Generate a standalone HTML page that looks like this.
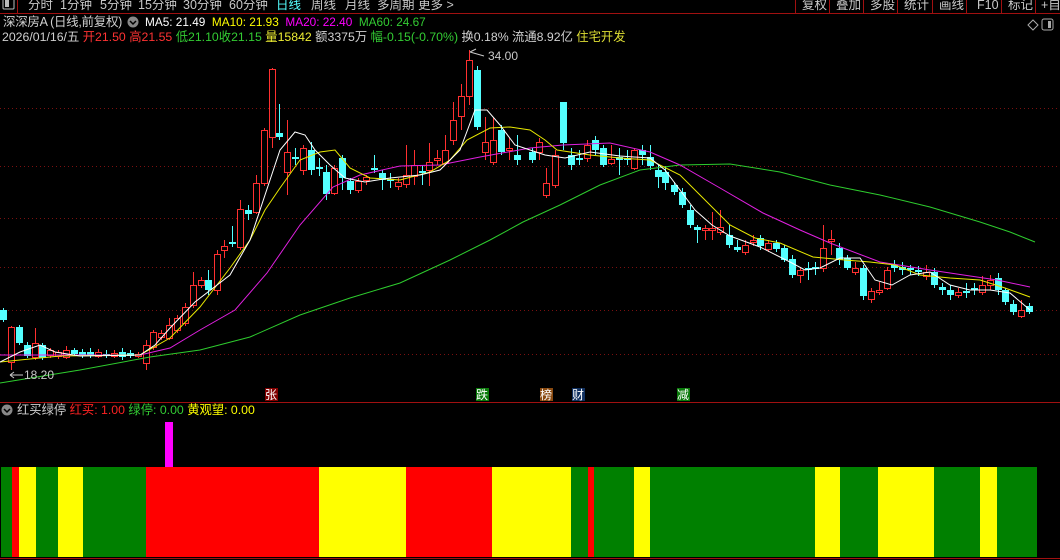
<!DOCTYPE html>
<html><head><meta charset="utf-8"><style>
html,body{margin:0;padding:0;background:#000;width:1060px;height:560px;overflow:hidden}
body{position:relative;font-family:"Liberation Sans","Noto Sans CJK SC",sans-serif;font-size:12px}
.t{position:absolute;white-space:nowrap;line-height:14px}
</style></head><body>
<svg id="s" width="1060" height="560" style="position:absolute;left:0;top:0">
<rect x="0" y="0" width="1060" height="13" fill="#000"/>
<line x1="0" y1="13.5" x2="1060" y2="13.5" stroke="#a01010"/>
<line x1="17.5" y1="0" x2="17.5" y2="13" stroke="#a01010"/>
<rect x="3" y="-3" width="11" height="12" fill="none" stroke="#bbb" rx="1"/>
<rect x="5" y="-1" width="4" height="8" fill="#bbb"/>
<g stroke="#a01010">
<line x1="795.5" y1="0" x2="795.5" y2="13"/><line x1="829.5" y1="0" x2="829.5" y2="13"/><line x1="863.5" y1="0" x2="863.5" y2="13"/><line x1="897.5" y1="0" x2="897.5" y2="13"/><line x1="932.5" y1="0" x2="932.5" y2="13"/><line x1="966.5" y1="0" x2="966.5" y2="13"/><line x1="1001.5" y1="0" x2="1001.5" y2="13"/><line x1="1035.5" y1="0" x2="1035.5" y2="13"/>
</g>
<g font-family="Liberation Sans,Noto Sans CJK SC,sans-serif" font-size="12.5" fill="#c8c8c8">
<text x="28" y="9">分时</text><text x="60" y="9">1分钟</text><text x="100" y="9">5分钟</text><text x="138" y="9">15分钟</text><text x="183" y="9">30分钟</text><text x="229" y="9">60分钟</text>
<text x="276" y="9" fill="#5ff">日线</text><text x="311" y="9">周线</text><text x="345" y="9">月线</text><text x="377" y="9">多周期</text><text x="418" y="9">更多 &gt;</text>
<text x="802" y="9">复权</text><text x="836" y="9">叠加</text><text x="870" y="9">多股</text><text x="904" y="9">统计</text><text x="939" y="9">画线</text><text x="977" y="9">F10</text><text x="1008" y="9">标记</text><text x="1041" y="9">+自</text>
</g>
<g stroke="#7a1010" stroke-dasharray="1,3">
<line x1="0" y1="108.5" x2="1060" y2="108.5"/><line x1="0" y1="166.5" x2="1060" y2="166.5"/><line x1="0" y1="218.5" x2="1060" y2="218.5"/><line x1="0" y1="267.5" x2="1060" y2="267.5"/><line x1="0" y1="310.5" x2="1060" y2="310.5"/><line x1="0" y1="354.5" x2="1060" y2="354.5"/>
</g>
<line x1="0" y1="402.5" x2="1060" y2="402.5" stroke="#a01010"/>
<line x1="0" y1="558.5" x2="1060" y2="558.5" stroke="#a01010"/>
<g id="c"></g>
<polyline fill="none" stroke="#2ecc2e" stroke-width="1" points="0,383 80,370 150,357 200,350 250,337 300,315 350,298 400,283 450,260 490,240 523,222 560,205 600,185 640,170 680,165 730,164 780,172 830,185 880,195 930,207 980,222 1010,232 1035,242"/>
<polyline fill="none" stroke="#e020e0" points="0,355 140,355 170,348 200,330 235,310 267,273 300,225 333,187 360,175 400,166 440,165 480,157 530,148 563,145 610,143 650,152 680,165 720,188 763,213 800,230 830,243 880,262 930,270 997,280 1030,287"/>
<polyline fill="none" stroke="#e8e800" points="0,362 60,356 140,355 170,338 200,307 230,268 250,240 265,210 280,188 300,160 320,152 335,150 350,168 370,178 400,180 430,172 450,160 467,140 490,128 510,127 530,130 545,140 557,150 590,155 620,158 650,160 680,175 700,195 730,225 755,238 780,243 813,257 845,260 870,262 895,265 920,275 950,278 980,280 1005,288 1030,297"/>
<polyline fill="none" stroke="#fff" points="0,362 20,352 40,345 55,352 80,356 140,355 155,345 170,328 195,302 230,275 250,240 265,195 280,150 295,132 305,135 315,150 330,165 345,178 365,182 390,178 420,175 440,170 460,150 475,110 487,110 500,125 515,145 530,150 545,155 565,158 590,152 620,156 650,158 665,170 680,190 695,210 712,225 730,236 760,247 790,262 805,270 820,268 840,258 860,258 875,280 892,285 910,275 930,272 950,285 970,290 990,290 1010,293 1030,310"/>
<g font-family="Liberation Sans,sans-serif" font-size="12" fill="#c8c8c8">
<text x="488" y="60">34.00</text>
<path d="M470 52 L476 49 M470 52 L484 56" stroke="#c8c8c8" fill="none"/>
<text x="24" y="379">18.20</text>
<path d="M10 375 L23 375 M10 375 L14 372 M10 375 L14 378" stroke="#c8c8c8" fill="none"/>
</g>
<g font-family="Noto Sans CJK SC,sans-serif" font-size="12" fill="#fff">
<rect x="265" y="388" width="13" height="13" fill="#800000"/><text x="265" y="399">张</text>
<rect x="476" y="388" width="13" height="13" fill="#0a7a0a"/><text x="476" y="399">跌</text>
<rect x="540" y="388" width="13" height="13" fill="#8a4a10"/><text x="540" y="399">榜</text>
<rect x="572" y="388" width="13" height="13" fill="#103060"/><text x="572" y="399">财</text>
<rect x="677" y="388" width="13" height="13" fill="#0a7a0a"/><text x="677" y="399">减</text>
</g>
<rect x="165" y="422" width="8" height="45" fill="#f0f"/>
<g>
<rect x="1" y="467" width="11" height="90" fill="#008000"/>
<rect x="12" y="467" width="7" height="90" fill="#f00"/>
<rect x="19" y="467" width="17" height="90" fill="#ff0"/>
<rect x="36" y="467" width="22" height="90" fill="#008000"/>
<rect x="58" y="467" width="25" height="90" fill="#ff0"/>
<rect x="83" y="467" width="63" height="90" fill="#008000"/>
<rect x="146" y="467" width="173" height="90" fill="#f00"/>
<rect x="319" y="467" width="87" height="90" fill="#ff0"/>
<rect x="406" y="467" width="86" height="90" fill="#f00"/>
<rect x="492" y="467" width="79" height="90" fill="#ff0"/>
<rect x="571" y="467" width="17" height="90" fill="#008000"/>
<rect x="588" y="467" width="6" height="90" fill="#f00"/>
<rect x="594" y="467" width="40" height="90" fill="#008000"/>
<rect x="634" y="467" width="16" height="90" fill="#ff0"/>
<rect x="650" y="467" width="165" height="90" fill="#008000"/>
<rect x="815" y="467" width="25" height="90" fill="#ff0"/>
<rect x="840" y="467" width="38" height="90" fill="#008000"/>
<rect x="878" y="467" width="56" height="90" fill="#ff0"/>
<rect x="934" y="467" width="46" height="90" fill="#008000"/>
<rect x="980" y="467" width="17" height="90" fill="#ff0"/>
<rect x="997" y="467" width="40" height="90" fill="#008000"/>
</g>
<path d="M1028 25 L1033 20 L1038 25 L1033 30 Z" fill="none" stroke="#aaa"/>
<rect x="1042" y="19" width="11" height="11" rx="2" fill="none" stroke="#aaa"/>
<rect x="1048" y="21" width="3" height="7" fill="#aaa"/>
<circle cx="133" cy="22" r="5.5" fill="#888"/>
<path d="M130 21 L133 24 L136 21" stroke="#000" fill="none" stroke-width="1.5"/>
<circle cx="7" cy="410" r="5.5" fill="#888"/>
<path d="M4 409 L7 412 L10 409" stroke="#000" fill="none" stroke-width="1.5"/>
</svg>
<div class="t" style="left:3px;top:15px;color:#d0d0d0;font-size:12.5px;letter-spacing:-0.3px">深深房A (日线,前复权)</div>
<div class="t" style="left:145px;top:15px;font-size:11.8px"><span style="color:#fff">MA5: 21.49</span>&nbsp; <span style="color:#ff0">MA10: 21.93</span>&nbsp; <span style="color:#f0f">MA20: 22.40</span>&nbsp; <span style="color:#3c3">MA60: 24.67</span></div>
<div class="t" style="left:2px;top:30px;font-size:12.3px;color:#d0d0d0">2026/01/16/五 <span style="color:#f33">开21.50</span> <span style="color:#f33">高21.55</span> <span style="color:#3c3">低21.10</span><span style="color:#3c3">收21.15</span> <span style="color:#ee3">量15842</span> 额3375万 <span style="color:#3c3">幅-0.15(-0.70%)</span> 换0.18% 流通8.92亿 <span style="color:#dd3">住宅开发</span></div>
<div class="t" style="left:17px;top:403px;font-size:12.3px;color:#d0d0d0">红买绿停 <span style="color:#f22">红买: 1.00</span> <span style="color:#3c3">绿停: 0.00</span> <span style="color:#ff0">黄观望: 0.00</span></div>
<script>
var d=[[3,'c',310,320,308,322],[11,'r',327,362,326,370],[19,'c',327,343,325,345],[27,'c',345,356,342,358],[35,'r',343,357,328,360],[42,'c',345,358,343,360],[50,'r',350,355,348,358],[58,'r',352,356,350,359],[66,'r',350,357,346,359],[74,'c',350,354,348,356],[82,'c',352,355,349,358],[90,'c',352,355,348,358],[98,'r',352,356,349,358],[106,'c',354,356,350,358],[114,'r',353,356,350,358],[122,'c',352,357,348,360],[130,'c',353,356,350,358],[138,'r',354,356,352,358],[146,'r',345,363,340,370],[153,'r',332,347,330,350],[161,'r',333,337,330,340],[169,'r',325,338,318,340],[177,'r',318,330,315,333],[185,'r',307,323,303,326],[193,'r',285,305,272,308],[201,'r',280,285,277,288],[208,'c',280,290,270,295],[217,'r',254,290,250,295],[224,'r',246,250,240,258],[232,'c',242,244,226,247],[240,'r',209,247,200,250],[248,'c',210,214,205,220],[256,'r',183,212,175,214],[264,'r',130,183,128,186],[272,'r',69,137,68,148],[279,'c',133,137,104,140],[287,'r',152,172,120,195],[295,'c',157,159,148,165],[303,'r',148,170,145,175],[311,'c',150,170,142,175],[319,'c',167,169,158,176],[326,'c',172,194,165,200],[334,'r',168,193,165,195],[342,'c',158,178,155,190],[350,'c',181,190,178,194],[358,'r',181,190,178,193],[366,'r',177,180,175,185],[374,'c',168,170,155,173],[382,'c',173,180,170,190],[390,'c',179,181,173,188],[398,'r',182,186,178,190],[406,'r',175,184,145,188],[414,'r',165,176,150,185],[422,'c',171,173,165,185],[429,'r',162,170,143,186],[437,'r',158,160,150,165],[445,'r',150,163,135,165],[453,'r',120,140,102,145],[461,'r',96,116,84,130],[469,'r',60,96,50,105],[477,'c',70,127,66,130],[485,'r',142,152,117,160],[493,'r',140,162,118,165],[501,'c',130,152,125,155],[509,'r',148,150,138,160],[517,'c',155,160,135,165],[532,'c',152,160,148,163],[539,'r',142,152,138,160],[546,'r',183,195,168,198],[555,'r',155,185,150,188],[563,'c',102,143,102,150],[571,'c',155,165,148,170],[579,'c',158,160,150,165],[587,'r',145,158,140,162],[595,'c',140,150,136,155],[603,'c',148,165,145,167],[611,'r',159,163,145,165],[619,'c',157,160,148,175],[627,'c',158,160,150,165],[634,'r',150,168,148,170],[642,'c',150,155,145,165],[650,'c',157,166,145,170],[658,'c',170,177,165,188],[665,'c',172,183,166,190],[674,'c',185,192,182,195],[682,'c',192,205,188,208],[690,'c',210,225,205,228],[697,'c',227,230,225,243],[705,'r',228,230,225,240],[712,'r',228,230,212,240],[720,'r',227,232,210,235],[729,'c',235,245,225,248],[737,'c',247,250,240,252],[745,'r',245,252,240,255],[753,'r',240,242,235,246],[760,'c',238,246,235,250],[768,'r',243,249,240,252],[776,'c',243,249,240,252],[784,'c',248,260,245,262],[792,'c',259,275,255,278],[800,'r',270,275,268,283],[808,'c',268,270,262,280],[815,'c',267,269,262,275],[823,'r',248,268,225,272],[831,'r',239,241,230,255],[839,'c',248,260,243,265],[847,'c',258,268,255,270],[855,'r',268,272,262,275],[863,'c',268,296,265,300],[871,'r',291,299,288,303],[879,'r',290,292,282,295],[887,'r',270,288,267,290],[894,'c',265,268,260,272],[902,'c',267,270,262,275],[910,'c',268,270,265,275],[918,'c',270,272,266,276],[926,'r',272,276,265,280],[934,'c',272,285,268,288],[942,'c',287,290,283,295],[950,'c',290,295,285,300],[958,'r',292,295,288,298],[966,'c',291,293,283,298],[974,'c',288,290,283,295],[982,'r',285,292,276,295],[990,'r',280,285,275,290],[998,'c',278,290,273,295],[1005,'c',290,302,288,305],[1013,'c',304,312,300,315],[1021,'r',310,316,300,318],[1029,'c',306,312,303,314]];
var h='';d.forEach(function(a){var x=a[0],col=a[1]=='r'?'#ff3030':'#54ffff';h+='<line x1="'+(x+.5)+'" y1="'+a[4]+'" x2="'+(x+.5)+'" y2="'+a[5]+'" stroke="'+col+'"/>';var hh=Math.max(a[3]-a[2],1);if(a[1]=='r')h+='<rect x="'+(x-2.5)+'" y="'+(a[2]+.5)+'" width="6" height="'+hh+'" fill="#000" stroke="'+col+'"/>';else h+='<rect x="'+(x-3)+'" y="'+a[2]+'" width="7" height="'+hh+'" fill="'+col+'"/>';});
document.getElementById('c').innerHTML=h;
</script>
</body></html>
